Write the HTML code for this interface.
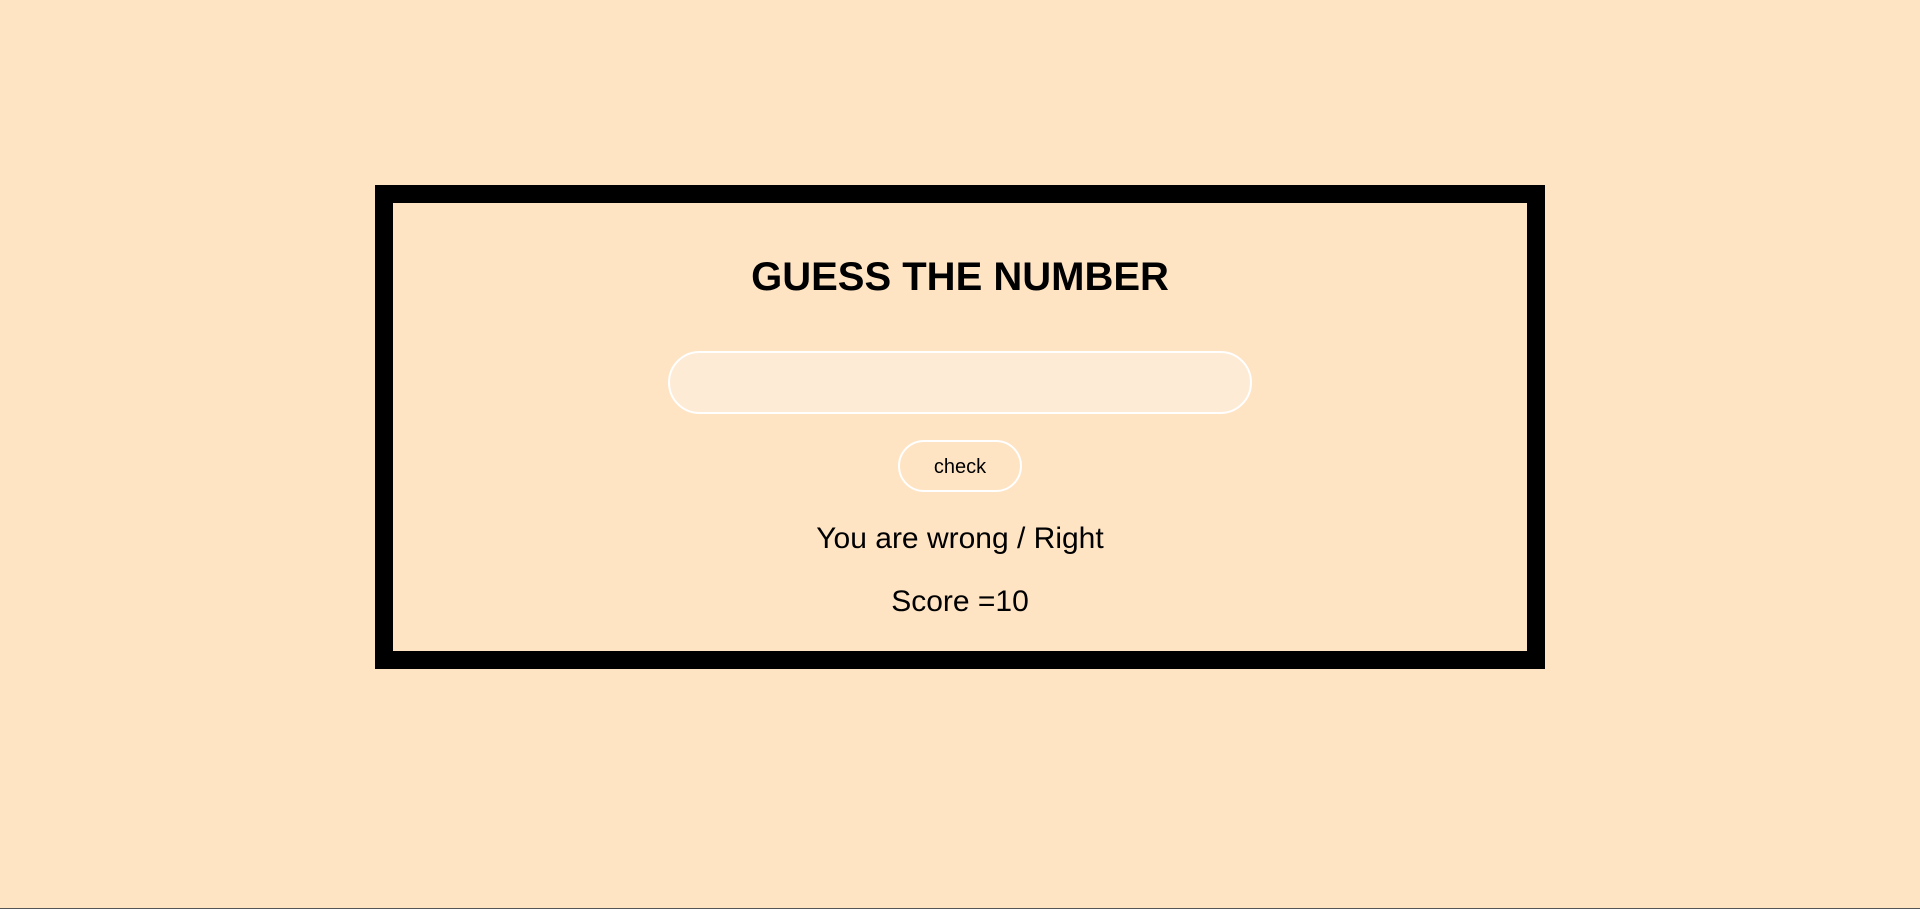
<!DOCTYPE html>
<html><head><meta charset="utf-8"><style>
html,body{margin:0;padding:0;}
body{width:1920px;height:909px;background:#ffe4c4;font-family:"Liberation Sans",Arial,sans-serif;position:relative;overflow:hidden;}
.box{position:absolute;left:375px;top:185px;width:1134px;height:448px;border:18px solid #000;}
.t{position:absolute;left:0;right:0;text-align:center;color:#000;}
h1{position:absolute;left:0;right:0;top:50px;margin:0;text-align:center;font-size:40px;line-height:48px;font-weight:bold;}
.inp{position:absolute;left:275px;top:148px;width:580px;height:59px;border:2px solid #fff;border-radius:32px;background:#feebd6;}
.btn{position:absolute;left:505px;top:237px;width:120px;height:48px;border:2px solid #fff;border-radius:26px;font-size:20px;line-height:50px;text-align:center;}
.bar{position:absolute;left:0;right:0;bottom:0;height:1px;background:#555;}
</style></head><body>
<div class="box">
<h1>GUESS THE NUMBER</h1>
<div class="inp"></div>
<div class="btn">check</div>
<div class="t" style="top:318px;font-size:30px;line-height:36px;">You are wrong / Right</div>
<div class="t" style="top:381px;font-size:30px;line-height:36px;">Score =10</div>
</div>
<div class="bar"></div>
</body></html>
